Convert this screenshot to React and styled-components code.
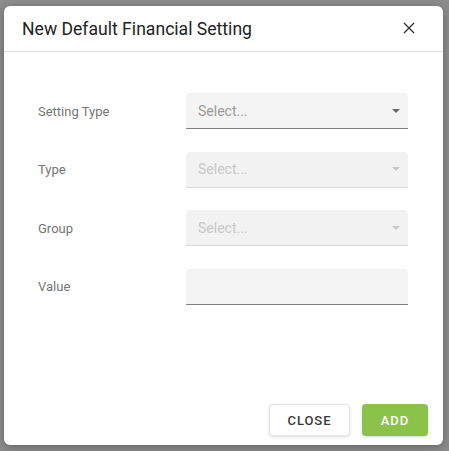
import React from "react"
import styled, { createGlobalStyle } from "styled-components"

const Global = createGlobalStyle`
  html, body {
    margin: 0;
    padding: 0;
    background: #8c8c8c;
    font-family: Roboto, "Liberation Sans", sans-serif;
  }
`

const Backdrop = styled.div`
  width: 449px;
  height: 451px;
  padding: 6px 6px 6px 4px;
  box-sizing: border-box;
`

const Modal = styled.div`
  width: 439px;
  height: 439px;
  background: #fff;
  border-radius: 6px;
  box-shadow: 0 2px 8px rgba(0, 0, 0, 0.3);
  display: flex;
  flex-direction: column;
`

const Header = styled.div`
  height: 45px;
  display: flex;
  align-items: center;
  justify-content: space-between;
  padding: 0 26px 0 18px;
  border-bottom: 1px solid #e3e3e3;
`

const Title = styled.h2`
  margin: 0;
  font-size: 17.6px;
  font-weight: 400;
  color: #222;
`

const CloseIcon = styled.button`
  border: none;
  background: none;
  padding: 0;
  width: 14px;
  height: 14px;
  cursor: pointer;
  display: flex;
`

const Body = styled.div`
  flex: 1;
  padding: 41px 34px 0 34px;
  display: flex;
  flex-direction: column;
  gap: 22.6px;
`

const Row = styled.div`
  display: grid;
  grid-template-columns: 148px 222px;
  align-items: center;
`

const Label = styled.span`
  font-size: 13px;
  color: #757575;
  padding-left: 0;
`

const Field = styled.div`
  height: 35px;
  background: ${p => (p.$disabled ? "#f2f2f2" : "#f4f4f4")};
  border-radius: 4px 4px 0 0;
  border-bottom: 1px solid ${p => (p.$disabled ? "#d9d9d9" : "#808080")};
  display: flex;
  align-items: center;
  justify-content: space-between;
  padding: 0 8px 0 12px;
  font-size: 14px;
  color: ${p => (p.$disabled ? "#c8c8c8" : "#9a9a9a")};
`

const Caret = styled.span`
  width: 0;
  height: 0;
  border-left: 4px solid transparent;
  border-right: 4px solid transparent;
  border-top: 4px solid ${p => (p.$disabled ? "#c8c8c8" : "#666")};
`

const Footer = styled.div`
  display: flex;
  justify-content: flex-end;
  gap: 12px;
  padding: 0 15px 9px 0;
`

const Button = styled.button`
  height: 32px;
  min-width: ${p => p.$w}px;
  border-radius: 4px;
  font-family: Roboto, "Liberation Sans", sans-serif;
  font-size: 13px;
  font-weight: 500;
  letter-spacing: 0.9px;
  cursor: pointer;
  border: ${p => (p.$primary ? "none" : "1px solid #e6e6e6")};
  background: ${p => (p.$primary ? "#8bc34a" : "#fff")};
  color: ${p => (p.$primary ? "#fff" : "#3a3a3a")};
  box-shadow: 0 1px 3px rgba(0, 0, 0, 0.15);
`

const rows = [
  { label: "Setting Type", select: true },
  { label: "Type", select: true, disabled: true },
  { label: "Group", select: true, disabled: true },
  { label: "Value" },
]

export default function App() {
  return (
    <Backdrop>
      <Global />
      <Modal>
        <Header>
          <Title>New Default Financial Setting</Title>
          <CloseIcon aria-label="close">
            <svg width="12" height="12" viewBox="0 0 12 12">
              <path d="M1 1L11 11M11 1L1 11" stroke="#333" strokeWidth="1.4" />
            </svg>
          </CloseIcon>
        </Header>
        <Body>
          {rows.map(r => (
            <Row key={r.label}>
              <Label>{r.label}</Label>
              <Field $disabled={r.disabled}>
                {r.select && <span>Select...</span>}
                {r.select && <Caret $disabled={r.disabled} />}
              </Field>
            </Row>
          ))}
        </Body>
        <Footer>
          <Button $w={81}>CLOSE</Button>
          <Button $primary $w={66}>ADD</Button>
        </Footer>
      </Modal>
    </Backdrop>
  )
}
